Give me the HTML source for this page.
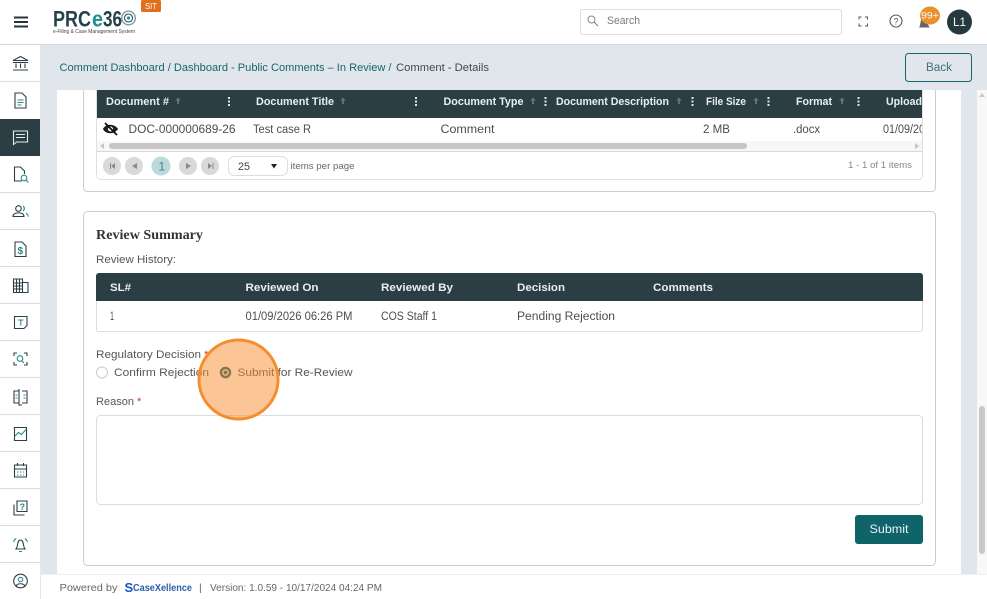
<!DOCTYPE html>
<html><head><meta charset="utf-8"><style>
html,body{margin:0;padding:0;background:#fff;width:987px;height:599px;overflow:hidden}
svg{display:block}
text{font-family:"Liberation Sans",sans-serif;font-size:11px;fill:#555}
.w{fill:#e8eef0;font-weight:700}
.d{fill:#4d4d4d;font-size:11.5px}
.i{fill:none;stroke:#2d4046;stroke-width:1.1}
.t{fill:none;stroke:#2a8a8a;stroke-width:1.1}
</style></head><body>
<svg width="987" height="599" viewBox="0 0 987 599" xmlns="http://www.w3.org/2000/svg" style="width:987px;height:599px">
<rect width="987" height="599" fill="#fff"/>
<!-- content background -->
<rect x="41" y="44" width="946" height="531" fill="#e0e6ec"/>
<rect x="57" y="90" width="904" height="485" fill="#fff"/>
<rect x="977" y="90" width="10" height="485" fill="#f8f8f8"/>
<rect x="979" y="406" width="6" height="148" rx="3" fill="#c8c8c8"/>
<path d="M982 93l-3 4h6z" fill="#c8c8c8"/>
<!-- header -->
<rect width="987" height="44" fill="#fff"/>
<rect y="44" width="987" height="1" fill="#d5dade"/>
<path d="M14 17.5h14M14 22h14M14 26.5h14" stroke="#26363b" stroke-width="2"/>
<text x="53" y="26.500" textLength="38" lengthAdjust="spacingAndGlyphs" style="font-size:22px;font-weight:700;fill:#24404a">PRC</text>
<text x="92" y="26.500" textLength="11" lengthAdjust="spacingAndGlyphs" style="font-size:22px;font-weight:700;fill:#1f8f8f">e</text>
<text x="103" y="26.500" textLength="19" lengthAdjust="spacingAndGlyphs" style="font-size:22px;font-weight:700;fill:#24404a">36</text>
<circle cx="128.500" cy="18" r="6.800" fill="none" stroke="#7f9a9e" stroke-width="1.4"/>
<circle cx="128.500" cy="18" r="4" fill="none" stroke="#26505a" stroke-width="1.1"/>
<circle cx="128.500" cy="18" r="1.600" fill="#1f8f8f"/>
<text x="53" y="33" textLength="82" lengthAdjust="spacingAndGlyphs" style="font-size:5px;fill:#444">e-Filing &amp; Case Management System</text>
<rect x="141" y="0" width="20" height="12" rx="1.5" fill="#e0701c"/>
<text x="145" y="9" textLength="12" lengthAdjust="spacingAndGlyphs" style="font-size:8px;fill:#fff">SIT</text>
<rect x="580.500" y="9.500" width="261" height="25" rx="2" fill="#fff" stroke="#ddd"/>
<circle cx="591.500" cy="19.500" r="3.500" fill="none" stroke="#888"/><path d="M594 22l4 4" stroke="#888" stroke-width="1.2"/>
<text x="607" y="24" textLength="33" lengthAdjust="spacingAndGlyphs" style="fill:#777">Search</text>
<path d="M859 19.500v-2.500h2.500M865 17h2.500v2.500M867.500 23.500v2.500h-2.500M861.500 26h-2.500v-2.500" fill="none" stroke="#555" stroke-width="1"/>
<circle cx="896" cy="21" r="6" fill="none" stroke="#555" stroke-width="1.1"/>
<text x="893.500" y="24.500" style="font-size:9px;fill:#555">?</text>
<path d="M919 27.500c2-2 1-11 5-11s3 9 6 11z" fill="#666"/>
<ellipse cx="930" cy="15.500" rx="10" ry="9" fill="#e8922c"/>
<text x="921" y="18.500" textLength="18" lengthAdjust="spacingAndGlyphs" style="font-size:9px;fill:#fff">99+</text>
<circle cx="959.500" cy="22" r="12.500" fill="#26393f"/>
<text x="953" y="26" textLength="13" lengthAdjust="spacingAndGlyphs" style="font-size:11.500px;fill:#fff">L1</text>
<!-- breadcrumb -->
<text x="59.500" y="71" textLength="332" lengthAdjust="spacingAndGlyphs" style="font-size:11px;fill:#17666a">Comment Dashboard / Dashboard - Public Comments – In Review /</text>
<text x="396" y="71" textLength="93" lengthAdjust="spacingAndGlyphs" style="font-size:11px;fill:#3d4a4e">Comment - Details</text>
<rect x="905.500" y="53.500" width="66" height="28" rx="3" fill="#e0e6ec" stroke="#17666a"/>
<text x="926" y="71" textLength="26" lengthAdjust="spacingAndGlyphs" style="font-size:11.500px;fill:#3f7276">Back</text>
<!-- sidebar -->
<rect width="40" height="554" y="45" fill="#fff"/>
<rect x="40" y="45" width="1" height="554" fill="#e4e8eb"/>
<rect y="119" width="40" height="37" fill="#2b3e44"/>
<g fill="#d8dcde">
<rect y="81" width="40" height="1"/><rect y="192" width="40" height="1"/><rect y="229" width="40" height="1"/><rect y="266" width="40" height="1"/><rect y="303" width="40" height="1"/><rect y="340" width="40" height="1"/><rect y="377" width="40" height="1"/><rect y="414" width="40" height="1"/><rect y="451" width="40" height="1"/><rect y="488" width="40" height="1"/><rect y="525" width="40" height="1"/><rect y="562" width="40" height="1"/>
</g>
<!-- 1 bank -->
<path class="i" d="M13 60.500l7.500-4 7.500 4zM13 62.500h15M16 63.500v4.500M20.500 63.500v4.500M25 63.500v4.500M13 70h15"/>
<!-- 2 doc -->
<path class="i" d="M15 93h7l4 4v11H15z"/><path class="t" d="M17.500 100h6M17.500 102.500h6M17.500 105h4"/>
<!-- 3 comment -->
<path d="M13.500 131h14v11h-11l-3 2.500z" fill="none" stroke="#e6eaec" stroke-width="1.1"/><path d="M16 134.500h9M16 137.500h9" stroke="#e6eaec" stroke-width="1.1"/>
<!-- 4 doc search -->
<path class="i" d="M22 181h-7.500v-14h6l4 4v3"/><circle class="t" cx="24" cy="178" r="2.800"/><path class="t" d="M26 180l2.500 2.500"/>
<!-- 5 users -->
<circle class="i" cx="18.500" cy="208.500" r="2.800"/><path class="i" d="M13 216.500c0-5 11-5 11 0z"/><path class="t" d="M23 206a3 3 0 0 1 0 5M26 213c1.500 1 2 2 2.500 3.500"/>
<!-- 6 invoice -->
<path class="i" d="M15 242h7l4 4v10.500H15z"/>
<text x="17.500" y="254" style="font-size:10px;font-weight:700;fill:#2a8a8a">$</text>
<!-- 7 building -->
<path class="i" d="M13.500 279h9v13.500h-9zM22.500 282.500h5.500v10h-5.500M13.500 283h9M13.500 286h9M13.500 289h9M16.500 279v13.500M19.500 279v13.500"/>
<!-- 8 note T -->
<path class="i" d="M14.500 316.500h12.500v9l-3 3h-9.500z"/><path class="t" d="M18 320h5.500M20.800 320v5.500"/>
<!-- 9 scan -->
<path class="i" d="M14 356v-3h3M24 353h3v3M27 362v3h-3M17 365h-3v-3"/><circle class="t" cx="20" cy="358.500" r="2.800"/><path class="t" d="M22 361l2 2"/>
<!-- 10 book -->
<path class="i" d="M14 391h5v12h-5zM22 391h5v12h-5M19 389v16h3"/><path class="t" d="M23.500 395h2M23.500 398h2M15.500 395h2M15.500 398h2"/>
<!-- 11 chart -->
<path class="i" d="M14.500 427.500h12v13h-12z"/><path class="t" d="M15 436l3.500-3.500 3 2 4.500-5"/>
<!-- 12 calendar -->
<path class="i" d="M14.500 465h12v12h-12zM14.500 469h12M17.500 463v3M23.500 463v3"/><path class="t" d="M17 472h7M17 475h7" stroke-dasharray="1.500 1.500"/>
<!-- 13 help stack -->
<path class="i" d="M17 501h10v10.500H17zM14 504.500V515h10.500"/>
<text x="19.500" y="510" style="font-size:9px;font-weight:700;fill:#2a8a8a">?</text>
<!-- 14 bell -->
<path class="i" d="M16 549c2-2 1-9 4.500-9s2.500 7 4.500 9z"/><path class="t" d="M13.500 542c.5-1.500 1-2.500 2.500-3.500M27.500 542c-.5-1.500-1-2.500-2.500-3.500M19 551.500h3"/>
<!-- 15 profile -->
<circle class="i" cx="20.500" cy="581" r="6.800"/><circle class="t" cx="20.500" cy="579.500" r="2.200"/><path class="i" d="M16 586c1.500-3 7.500-3 9 0"/>
<!-- card 1 -->
<path d="M83.500 90v97.500a4 4 0 0 0 4 4h844a4 4 0 0 0 4-4V90" fill="#fff" stroke="#c9cdcf"/>
<path d="M96.500 90v85.500a4 4 0 0 0 4 4h818a4 4 0 0 0 4-4V90" fill="#fff" stroke="#e0e0e0"/>
<rect x="97" y="90" width="825" height="28" fill="#2b3e44"/>
<g class="hdr">
<text class="w" x="106" y="105" textLength="63" lengthAdjust="spacingAndGlyphs">Document #</text>
<text class="w" x="256" y="105" textLength="78" lengthAdjust="spacingAndGlyphs">Document Title</text>
<text class="w" x="443.500" y="105" textLength="80" lengthAdjust="spacingAndGlyphs">Document Type</text>
<text class="w" x="556" y="105" textLength="113" lengthAdjust="spacingAndGlyphs">Document Description</text>
<text class="w" x="706" y="105" textLength="40" lengthAdjust="spacingAndGlyphs">File Size</text>
<text class="w" x="796" y="105" textLength="36" lengthAdjust="spacingAndGlyphs">Format</text>
<text class="w" x="886" y="105" textLength="36" lengthAdjust="spacingAndGlyphs">Upload</text>
</g>
<g fill="#5f7278">
<path d="M178 97.500l3 3h-2v3.500h-2v-3.500h-2z"/><path d="M343 97.500l3 3h-2v3.500h-2v-3.500h-2z"/><path d="M533 97.500l3 3h-2v3.500h-2v-3.500h-2z"/><path d="M679 97.500l3 3h-2v3.500h-2v-3.500h-2z"/><path d="M756 97.500l3 3h-2v3.500h-2v-3.500h-2z"/><path d="M842 97.500l3 3h-2v3.500h-2v-3.500h-2z"/>
</g>
<g fill="#dfe5e7">
<path d="M228 97h2v2h-2zM228 100.500h2v2h-2zM228 104h2v2h-2z"/>
<path d="M415 97h2v2h-2zM415 100.500h2v2h-2zM415 104h2v2h-2z"/>
<path d="M544.500 97h2v2h-2zM544.500 100.500h2v2h-2zM544.500 104h2v2h-2z"/>
<path d="M691.500 97h2v2h-2zM691.500 100.500h2v2h-2zM691.500 104h2v2h-2z"/>
<path d="M767.500 97h2v2h-2zM767.500 100.500h2v2h-2zM767.500 104h2v2h-2z"/>
<path d="M857.500 97h2v2h-2zM857.500 100.500h2v2h-2zM857.500 104h2v2h-2z"/>
</g>
<!-- row -->
<path d="M103.500 129c3-5 10-5 14 0-4 5-11 5-14 0z" fill="#222" stroke="#111"/>
<circle cx="110.500" cy="129" r="2.500" fill="#fff"/>
<path d="M105 123l12 12" stroke="#111" stroke-width="1.800"/>
<text class="d" x="128.500" y="133" textLength="107" lengthAdjust="spacingAndGlyphs">DOC-000000689-26</text>
<text class="d" x="253" y="133" textLength="58" lengthAdjust="spacingAndGlyphs">Test case R</text>
<text class="d" x="440.500" y="133" textLength="54" lengthAdjust="spacingAndGlyphs">Comment</text>
<text class="d" x="703" y="133" textLength="27" lengthAdjust="spacingAndGlyphs">2 MB</text>
<text class="d" x="793" y="133" textLength="27" lengthAdjust="spacingAndGlyphs">.docx</text>
<svg x="883" y="118" width="39" height="24"><text class="d" x="0" y="15" textLength="54" lengthAdjust="spacingAndGlyphs">01/09/2026</text></svg>
<!-- h scroll -->
<rect x="97" y="141" width="825" height="10" fill="#f7f7f7"/>
<rect x="109" y="143" width="638" height="6" rx="3" fill="#c6c6c6"/>
<path d="M100 146l4-3v6z" fill="#c6c6c6"/><path d="M919 146l-4-3v6z" fill="#c6c6c6"/>
<rect x="97" y="151" width="825" height="1" fill="#d8d8d8"/>
<!-- pager -->
<g fill="#d9d9d9">
<circle cx="112" cy="166" r="9"/><circle cx="134" cy="166" r="9"/><circle cx="188" cy="166" r="9"/><circle cx="210" cy="166" r="9"/>
</g>
<circle cx="161" cy="166" r="9.500" fill="#bcdadd"/>
<text x="158.500" y="170.500" style="font-size:12px;fill:#4d7f82">1</text>
<g fill="#8a8a8a">
<path d="M110 163h1v6h-1zM115 163v6l-4-3z"/>
<path d="M137 163v6l-5-3z"/>
<path d="M186 163v6l5-3z"/>
<path d="M208 163v6l4-3zM212.500 163h1v6h-1z"/>
</g>
<rect x="228.500" y="156.500" width="59" height="19" rx="6" fill="#fff" stroke="#ddd"/>
<text x="238" y="170" textLength="12" lengthAdjust="spacingAndGlyphs" style="font-size:11px;fill:#444">25</text>
<path d="M271 164h6l-3 4.500z" fill="#222"/>
<text x="290.500" y="169" textLength="64" lengthAdjust="spacingAndGlyphs" style="font-size:9.500px;fill:#666">items per page</text>
<text x="848" y="168" textLength="64" lengthAdjust="spacingAndGlyphs" style="font-size:9.500px;fill:#888">1 - 1 of 1 items</text>
<!-- card 2 -->
<rect x="83.500" y="211.500" width="852" height="354" rx="4" fill="#fff" stroke="#c9cdcf"/>
<text x="96" y="239" textLength="107" lengthAdjust="spacingAndGlyphs" style="font-family:'Liberation Serif',serif;font-size:14px;font-weight:700;fill:#333">Review Summary</text>
<text x="96" y="263" textLength="80" lengthAdjust="spacingAndGlyphs" style="fill:#555">Review History:</text>
<rect x="96.500" y="273.500" width="826" height="58" rx="2" fill="#fff" stroke="#ddd"/>
<path d="M96 276a3 3 0 0 1 3-3h821a3 3 0 0 1 3 3v25H96z" fill="#2b3e44"/>
<text class="w" x="110" y="291" textLength="21" lengthAdjust="spacingAndGlyphs">SL#</text>
<text class="w" x="245.500" y="291" textLength="73" lengthAdjust="spacingAndGlyphs">Reviewed On</text>
<text class="w" x="381" y="291" textLength="72" lengthAdjust="spacingAndGlyphs">Reviewed By</text>
<text class="w" x="517" y="291" textLength="48" lengthAdjust="spacingAndGlyphs">Decision</text>
<text class="w" x="653" y="291" textLength="60" lengthAdjust="spacingAndGlyphs">Comments</text>
<text class="d" x="110" y="320" textLength="4" lengthAdjust="spacingAndGlyphs">1</text>
<text class="d" x="245.500" y="320" textLength="107" lengthAdjust="spacingAndGlyphs">01/09/2026 06:26 PM</text>
<text class="d" x="381" y="320" textLength="56" lengthAdjust="spacingAndGlyphs">COS Staff 1</text>
<text class="d" x="517" y="320" textLength="98" lengthAdjust="spacingAndGlyphs">Pending Rejection</text>
<!-- decision -->
<text x="96" y="358" textLength="105" lengthAdjust="spacingAndGlyphs" style="fill:#555">Regulatory Decision</text>
<text x="204" y="358" style="fill:#c0392b">*</text>
<circle cx="102" cy="372.500" r="5.500" fill="#fff" stroke="#ccc"/>
<text x="114" y="376" textLength="95" lengthAdjust="spacingAndGlyphs" style="fill:#555">Confirm Rejection</text>
<circle cx="225.500" cy="372.500" r="4.500" fill="#fff" stroke="#17666a" stroke-width="2.500"/>
<circle cx="225.500" cy="372.500" r="2" fill="#17666a"/>
<text x="237.500" y="376" textLength="115" lengthAdjust="spacingAndGlyphs" style="fill:#555">Submit for Re-Review</text>
<text x="96" y="405" textLength="38" lengthAdjust="spacingAndGlyphs" style="fill:#555">Reason</text>
<text x="137" y="405" style="fill:#c0392b">*</text>
<!-- textarea -->
<rect x="96.500" y="415.500" width="826" height="89" rx="4" fill="#fff" stroke="#ddd"/>
<!-- highlight -->
<circle cx="238.500" cy="379.500" r="39.500" fill="#f98b2e" fill-opacity=".5" stroke="#f58d2e" stroke-width="3"/>
<rect x="855" y="515" width="68" height="29" rx="3" fill="#0e6468"/>
<text x="869.500" y="533" textLength="39" lengthAdjust="spacingAndGlyphs" style="font-size:11.500px;fill:#eef">Submit</text>
<!-- footer -->
<rect x="41" y="575" width="946" height="24" fill="#fff"/>
<rect x="41" y="574" width="946" height="1" fill="#eceff1"/>
<text x="59.500" y="591" textLength="58" lengthAdjust="spacingAndGlyphs" style="font-size:10.500px;fill:#666">Powered by</text>
<text x="124.500" y="592" style="font-size:13px;font-weight:700;fill:#1556c8">S</text>
<text x="133" y="591" textLength="59" lengthAdjust="spacingAndGlyphs" style="font-size:10.500px;font-weight:700;fill:#2a5fa8">CaseXellence</text>
<text x="199" y="591" style="font-size:10.500px;fill:#666">|</text>
<text x="210" y="591" textLength="172" lengthAdjust="spacingAndGlyphs" style="font-size:10.500px;fill:#666">Version: 1.0.59 - 10/17/2024 04:24 PM</text>
</svg>
</body></html>
